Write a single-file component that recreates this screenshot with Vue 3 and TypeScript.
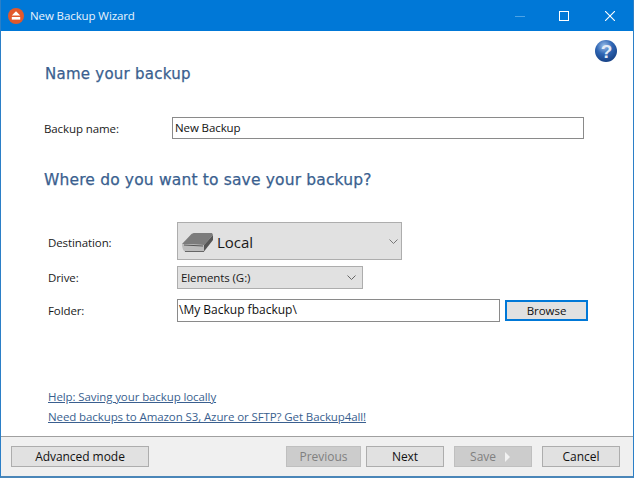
<template>
  <div class="window">
    <header class="titlebar">
      <svg class="app-icon" width="16" height="16" viewBox="0 0 16 16">
        <circle cx="8" cy="8" r="8" fill="#e2582b" />
        <path d="M8 3.2 12.2 7.6H3.8Z" fill="#fff" />
        <rect x="3.8" y="9" width="8.4" height="2.6" fill="#fff" />
      </svg>
      <span class="title">New Backup Wizard</span>
      <div class="controls">
        <svg class="min-icon" width="10" height="10" viewBox="0 0 10 10"><path d="M0 5.5H10" stroke="#4da3e6" /></svg>
        <svg width="10" height="10" viewBox="0 0 10 10"><rect x="0.5" y="0.5" width="9" height="9" fill="none" stroke="#fff" /></svg>
        <svg width="10" height="10" viewBox="0 0 10 10"><path d="M0 0 10 10M10 0 0 10" stroke="#fff" stroke-width="1.1" /></svg>
      </div>
    </header>

    <main class="content">
      <svg class="help" width="24" height="24" viewBox="0 0 24 24">
        <defs>
          <radialGradient id="ball" cx="0.42" cy="0.28" r="0.8">
            <stop offset="0" stop-color="#9cc0ea" />
            <stop offset="0.45" stop-color="#2f66b4" />
            <stop offset="1" stop-color="#123a7c" />
          </radialGradient>
        </defs>
        <circle cx="12" cy="12" r="11" fill="url(#ball)" />
        <text x="12.5" y="19" text-anchor="middle" class="help-mark">?</text>
      </svg>

      <h2 class="heading first">Name your backup</h2>
      <div class="name-row">
        <label class="label">Backup name:</label>
        <div class="input name-input">New Backup</div>
      </div>

      <h2 class="heading second">Where do you want to save your backup?</h2>

      <div class="form">
        <label class="label dest-label">Destination:</label>
        <div class="select dest">
          <svg class="disk" width="33" height="21" viewBox="0 0 33 21">
            <path d="M1 12 10 2.5C11 1.5 12 1 14 1H31L32 3 23 13Z" fill="#7c7c7c" />
            <path d="M1 12 23 13V19.5L5 20C2.5 20 1 16 1 12Z" fill="#bcbcbc" />
            <path d="M3 13 22 14" stroke="#555" fill="none" />
            <path d="M23 13 32 3V8L23 19.5Z" fill="#555" />
            <path d="M4 19.5H23" stroke="#666" fill="none" />
          </svg>
          <span class="dest-text">Local</span>
          <svg class="chevron" width="9" height="5" viewBox="0 0 9 5"><path d="M0.5 0.5 4.5 4.5 8.5 0.5" fill="none" stroke="#777" /></svg>
        </div>

        <label class="label">Drive:</label>
        <div class="select drive">
          <span>Elements (G:)</span>
          <svg class="chevron" width="9" height="5" viewBox="0 0 9 5"><path d="M0.5 0.5 4.5 4.5 8.5 0.5" fill="none" stroke="#666" /></svg>
        </div>

        <label class="label">Folder:</label>
        <div class="folder-row">
          <div class="input folder-input">\My Backup fbackup\</div>
          <button class="btn browse">Browse</button>
        </div>
      </div>

      <div class="links">
        <a class="link">Help: Saving your backup locally</a>
        <a class="link">Need backups to Amazon S3, Azure or SFTP? Get Backup4all!</a>
      </div>
    </main>

    <footer class="footer">
      <button class="btn advanced">Advanced mode</button>
      <div class="nav">
        <button class="btn previous" disabled>Previous</button>
        <button class="btn next">Next</button>
        <button class="btn save" disabled>
          Save
          <svg width="7" height="10" viewBox="0 0 7 10"><path d="M1 0 6 5 1 10Z" fill="#f2f2f2" /></svg>
        </button>
        <button class="btn cancel">Cancel</button>
      </div>
    </footer>
  </div>
</template>

<script setup lang="ts">
</script>

<style>
html,
body {
  margin: 0;
  background: #fff;
}
</style>

<style scoped>
.window {
  width: 634px;
  height: 478px;
  box-sizing: border-box;
  display: flex;
  flex-direction: column;
  border: 1px solid #2b7fc7;
  border-top: 0;
  border-bottom: 2px solid #4a86b8;
  font-family: "Open Sans", "Noto Sans", sans-serif;
  font-size: 11.5px;
  letter-spacing: -0.1px;
  color: #1a1a1a;
  overflow: hidden;
}

.titlebar {
  height: 31px;
  flex: none;
  margin: 0 -1px;
  background: #0078d7;
  display: flex;
  align-items: center;
  padding-left: 8px;
  color: #fff;
}

.app-icon {
  flex: none;
}

.title {
  margin-left: 6px;
  color: #e8f3fc;
}

.controls {
  margin-left: auto;
  display: flex;
  gap: 36px;
  padding-right: 19px;
  align-items: center;
}

.min-icon {
  margin-right: -2px;
}

.content {
  flex: 1;
  position: relative;
  background: #fff;
  padding-left: 43px;
  min-height: 0;
}

.help {
  position: absolute;
  right: 15px;
  top: 8px;
}

.help-mark {
  font-family: "Liberation Sans", sans-serif;
  font-weight: 700;
  font-size: 19px;
  fill: #e4ecf6;
}

.heading {
  margin: 0;
  font-family: "DejaVu Sans", sans-serif;
  font-weight: 400;
  color: #3a5f8f;
  font-size: 15px;
  line-height: 20px;
  letter-spacing: 0.25px;
  -webkit-text-stroke: 0.25px #3a5f8f;
}

.heading.first {
  padding-left: 1px;
  padding-top: 33px;
}

.heading.second {
  font-size: 15.5px;
  letter-spacing: 0.16px;
  margin-top: 31px;
}

.name-row {
  display: flex;
  align-items: center;
  margin-top: 33px;
}

.name-row .label {
  width: 128px;
  flex: none;
}

.input {
  box-sizing: border-box;
  height: 22px;
  border: 1px solid #8a8a8a;
  background: #fff;
  padding-left: 2px;
  line-height: 19px;
  color: #111;
}

.name-input {
  width: 412px;
}

.form {
  display: grid;
  grid-template-columns: 129px 1fr;
  grid-template-rows: 44px 33px 23px;
  align-items: start;
  margin-top: 32px;
  padding-left: 4px;
}

.form > .label {
  padding-top: 4px;
  line-height: 16px;
}

.form > .dest-label {
  padding-top: 13px;
}

.form > .select {
  box-sizing: border-box;
  background: #e1e1e1;
  border: 1px solid #adadad;
  display: flex;
  align-items: center;
}

.dest {
  width: 225px;
  height: 38px;
  padding-left: 3px;
}

.disk {
  margin-top: 2px;
}

.dest-text {
  font-size: 15px;
  letter-spacing: 0;
  margin-left: 3px;
  padding-top: 2px;
}

.drive {
  width: 186px;
  height: 23px;
  padding-left: 3px;
}

.chevron {
  margin-left: auto;
  margin-right: 3px;
}

.drive .chevron {
  margin-right: 6px;
}

.folder-row {
  display: flex;
  align-items: flex-start;
  gap: 5px;
}

.folder-input {
  width: 323px;
  height: 23px;
  font-size: 12px;
  letter-spacing: 0;
  line-height: 20px;
  padding-left: 1px;
}

.btn {
  box-sizing: border-box;
  height: 21px;
  padding: 0;
  border: 1px solid #adadad;
  background: #e1e1e1;
  font-family: inherit;
  font-size: 12px;
  letter-spacing: -0.05px;
  color: #111;
  display: flex;
  align-items: center;
  justify-content: center;
}

.browse {
  width: 83px;
  margin-top: 1px;
  font-size: 11.5px;
  border: 2px solid #0078d7;
}

.links {
  display: flex;
  flex-direction: column;
  gap: 2px;
  margin-top: 66px;
  padding-left: 4px;
}

.link {
  line-height: 18px;
  color: #3a5f8f;
  text-decoration: underline;
}

.footer {
  flex: none;
  height: 40px;
  box-sizing: border-box;
  border-top: 1px solid #a0a0a0;
  background: #f0f0f0;
  display: flex;
  align-items: center;
  padding: 0 13px 0 10px;
}

.advanced {
  width: 138px;
}

.nav {
  margin-left: auto;
  display: flex;
}

.previous {
  width: 75px;
}

.next {
  width: 78px;
  margin-left: 5px;
}

.save {
  width: 78px;
  margin-left: 10px;
  gap: 8px;
  padding-right: 5px;
}

.cancel {
  width: 78px;
  margin-left: 10px;
}

.btn:disabled {
  background: #ccc;
  border-color: #bfbfbf;
  color: #808080;
}
</style>
